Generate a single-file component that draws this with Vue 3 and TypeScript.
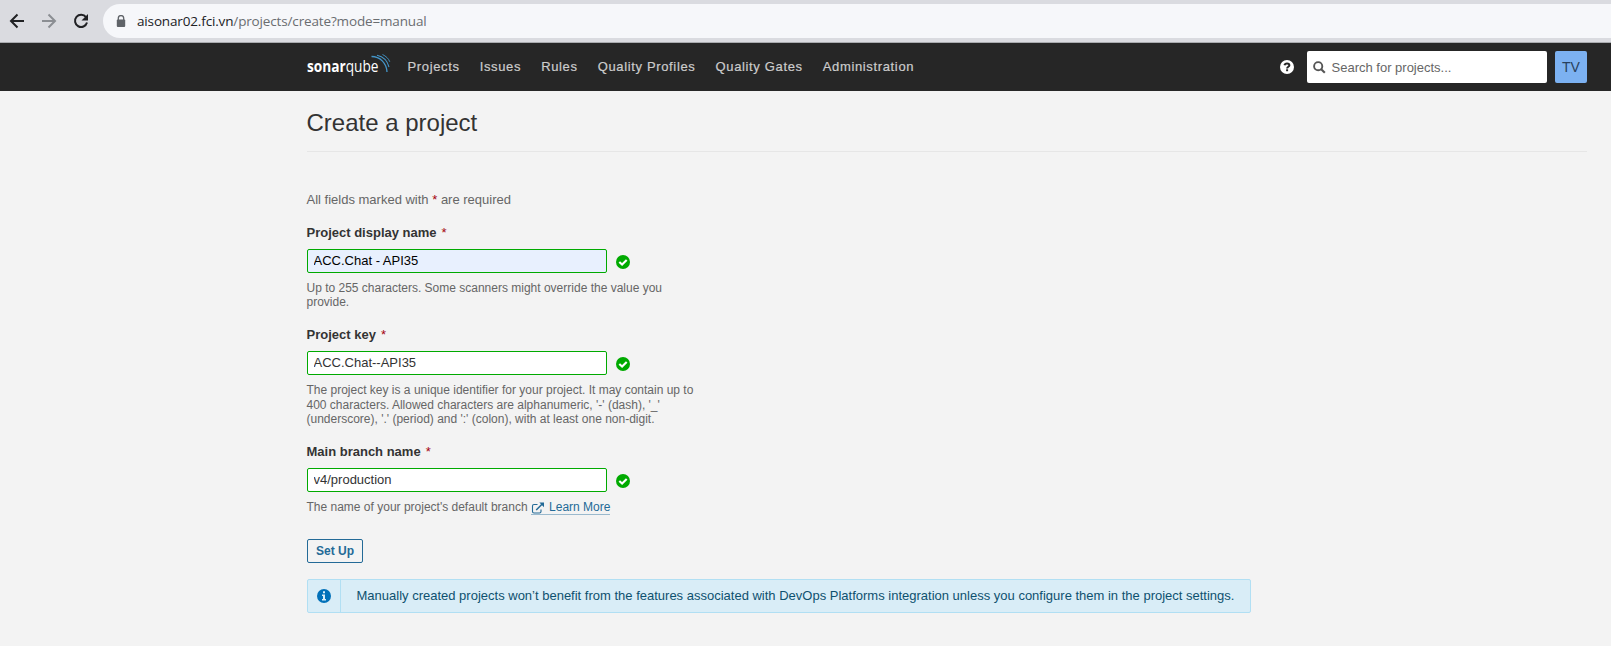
<script setup lang="ts">
import { ref } from 'vue'

interface Field {
  id: string
  label: string
  value: string
  hint: string
  autofilled?: boolean
  link?: string
}

const navItems: string[] = ['Projects', 'Issues', 'Rules', 'Quality Profiles', 'Quality Gates', 'Administration']

const fields = ref<Field[]>([
  {
    id: 'name',
    label: 'Project display name',
    value: 'ACC.Chat - API35',
    hint: 'Up to 255 characters. Some scanners might override the value you\nprovide.',
    autofilled: true,
  },
  {
    id: 'key',
    label: 'Project key',
    value: 'ACC.Chat--API35',
    hint: "The project key is a unique identifier for your project. It may contain up to\n400 characters. Allowed characters are alphanumeric, '-' (dash), '_'\n(underscore), '.' (period) and ':' (colon), with at least one non-digit.",
  },
  {
    id: 'branch',
    label: 'Main branch name',
    value: 'v4/production',
    hint: "The name of your project's default branch",
    link: 'Learn More',
  },
])
</script>

<template>
  <div class="page">
    <div class="browser">
      <svg class="browser-icons" width="103" height="42" viewBox="0 0 103 42" fill="none" stroke-width="2">
        <path d="M24 21H11.500M17.500 14.500 11 21l6.500 6.500" stroke="#202124" />
        <path d="M42 21h12.500M48.500 14.500 55 21l-6.500 6.500" stroke="#8b8e93" />
        <path d="M86 17.200A6.100 6.100 0 1 0 87 22.500" stroke="#202124" />
        <path d="M88 14v6.500h-6.500z" fill="#202124" />
      </svg>
      <div class="omnibox">
        <svg class="lock" width="10" height="13" viewBox="0 0 10 13">
          <path d="M2.300 5V3.300a2.700 2.700 0 0 1 5.400 0V5" fill="none" stroke="#5f6368" stroke-width="1.300" />
          <rect x="0.800" y="4.500" width="8.400" height="7.500" rx="1" fill="#5f6368" />
        </svg>
        <span class="host">aisonar02.fci.vn</span><span class="path">/projects/create?mode=manual</span>
      </div>
    </div>

    <header class="navbar">
      <svg class="logo" width="84" height="30" viewBox="0 0 84 30">
        <text x="0" y="21" textLength="71.500" lengthAdjust="spacingAndGlyphs"><tspan class="logo-bold">sonar</tspan><tspan class="logo-light">qube</tspan></text>
        <g fill="none" stroke="#4495c8">
          <path d="M64.500 5.500C73 5.500 79.500 12 80 21" stroke-width="1.300" />
          <path d="M70 4.200C76 5.500 80.500 10 82 16" stroke-width="1.100" />
          <path d="M75.500 3.500C79 5.200 81.500 7.500 82.800 10.800" stroke-width="0.900" />
        </g>
      </svg>
      <nav class="menu">
        <a v-for="item in navItems" :key="item">{{ item }}</a>
      </nav>
      <svg class="help" width="14" height="14" viewBox="0 0 14 14">
        <circle cx="7" cy="7" r="7" fill="#fff" />
        <path d="M4.500 5.300C4.800 3.900 5.900 3.400 7 3.400c1.300 0 2.400.8 2.400 1.900 0 1.500-2.300 1.500-2.300 3.100" fill="none" stroke="#262626" stroke-width="2" />
        <rect x="6.100" y="9.300" width="2" height="1.900" fill="#262626" />
      </svg>
      <div class="search">
        <svg width="13" height="13" viewBox="0 0 13 13" fill="none" stroke="#555">
          <circle cx="5.200" cy="5.200" r="4.100" stroke-width="1.900" />
          <path d="M8.200 8.200 11.800 11.800" stroke-width="2.100" />
        </svg>
        <span>Search for projects...</span>
      </div>
      <div class="avatar">TV</div>
    </header>

    <main class="content">
      <h1>Create a project</h1>
      <p class="required-note">All fields marked with <em>*</em> are required</p>

      <div v-for="field in fields" :key="field.id" class="field" :class="'field-' + field.id">
        <label :for="field.id">{{ field.label }}<em>*</em></label>
        <div class="control">
          <input :id="field.id" v-model="field.value" type="text" :class="{ autofilled: field.autofilled }" />
          <svg width="14" height="14" viewBox="0 0 14 14">
            <circle cx="7" cy="7" r="7" fill="#0a0" />
            <path d="M3.300 7 6.100 9.600 10.700 5" fill="none" stroke="#fff" stroke-width="2.100" />
          </svg>
        </div>
        <div class="hint"><span class="hint-text">{{ field.hint }}</span><a v-if="field.link" class="learn">
            <svg width="14" height="12" viewBox="0 0 14 12" fill="none" stroke="#236a97">
              <path d="M6.500 2.500H3Q1.500 2.500 1.500 4V9.500Q1.500 11 3 11H8.500Q10 11 10 9.500V7.500" stroke-width="1.100" />
              <path d="M5.200 8 11 2.200" stroke-width="1.500" />
              <path d="M8.300.5H13V5.200z" fill="#236a97" stroke="none" />
            </svg><span>{{ field.link }}</span></a></div>
      </div>

      <button class="submit" type="button">Set Up</button>

      <div class="alert">
        <div class="alert-icon">
          <svg width="14" height="14" viewBox="0 0 14 14">
            <circle cx="7" cy="7" r="7" fill="#0271b9" />
            <path d="M6 2.300h2v1.900H6zM5 5.400h3v4.500h1v1.500H5V9.900h1V6.900H5z" fill="#d9edf7" />
          </svg>
        </div>
        <p>Manually created projects won’t benefit from the features associated with DevOps Platforms integration unless you configure them in the project settings.</p>
      </div>
    </main>
  </div>
</template>

<style>
body {
  margin: 0;
  background: #f3f3f3;
}
</style>

<style scoped>
* {
  box-sizing: border-box;
}
.page {
  width: 1611px;
  height: 646px;
  overflow: hidden;
  background: #f3f3f3;
  color: #333;
  font-family: 'Liberation Sans', Arial, sans-serif;
  font-size: 13px;
  white-space: nowrap;
}
.browser {
  display: flex;
  height: 43px;
  padding-top: 4px;
  background: #dadbe0;
  border-bottom: 1px solid #a9abaf;
}
.browser-icons {
  flex: none;
  margin-top: -4px;
}
.omnibox {
  display: flex;
  align-items: center;
  flex: 1;
  height: 34px;
  padding-left: 13px;
  border-radius: 17px 0 0 17px;
  background: #f6f7fa;
  font-family: 'Open Sans', 'Noto Sans', sans-serif;
  font-size: 13.5px;
  letter-spacing: -0.15px;
}
.lock {
  margin-right: 11px;
}
.host {
  color: #202124;
}
.path {
  color: #6a6d71;
}
.navbar {
  display: flex;
  align-items: center;
  height: 48px;
  padding: 0 24px 0 306.5px;
  background: #262626;
}
.logo {
  flex: none;
  margin-top: -2px;
  font-family: 'Open Sans', sans-serif;
  font-size: 15.5px;
  fill: #fff;
}
.logo-bold {
  font-weight: 700;
}
.logo-light {
  font-weight: 400;
}
.menu {
  display: flex;
  flex: 1;
  gap: 20px;
  margin: -2px 0 0 17px;
  color: #ccc;
  font-size: 13px;
  letter-spacing: 0.65px;
  -webkit-text-stroke: 0.2px #ccc;
}
.search {
  display: flex;
  align-items: center;
  width: 240px;
  height: 32px;
  margin-left: 13px;
  padding-left: 6px;
  border-radius: 2px;
  background: #fff;
  color: #666;
}
.search span {
  margin-left: 5.5px;
}
.avatar {
  width: 32px;
  height: 32px;
  margin-left: 8px;
  border-radius: 2px;
  background: #7cb1f1;
  color: #28405c;
  font-size: 14px;
  line-height: 32px;
  text-align: center;
}
.content {
  padding: 0 24px 0 306.5px;
}
h1 {
  height: 61px;
  margin: 0;
  padding-top: 20px;
  border-bottom: 1px solid #e6e6e6;
  font-size: 24px;
  font-weight: 400;
  line-height: 24px;
}
em {
  color: #a4030f;
  font-style: normal;
  font-weight: 400;
}
.required-note {
  margin: 40px 0 17px;
  color: #666;
  line-height: 16px;
}
.field {
  margin-bottom: 17px;
}
label {
  display: block;
  font-weight: 700;
  line-height: 16px;
}
label em {
  margin-left: 5px;
}
.control {
  display: flex;
  align-items: center;
  gap: 9.5px;
  height: 24px;
  margin: 8px 0;
}
.control svg {
  margin-top: 2px;
}
input {
  width: 300px;
  height: 24px;
  padding: 0 6px 2px;
  border: 1px solid #0a0;
  border-radius: 2px;
  background: #fff;
  color: #333;
  font: 13px 'Liberation Sans', Arial, sans-serif;
  outline: none;
}
input.autofilled {
  background: #e8f0fe;
  color: #000;
}
.hint {
  display: flex;
  color: #666;
  font-size: 12px;
  line-height: 14.5px;
}
.hint-text {
  white-space: pre-line;
}
.field-name .hint {
  height: 29px;
  line-height: 14.2px;
}
.field-key .hint {
  padding-bottom: 0.5px;
}
.field-branch {
  height: 71px;
  margin-bottom: 24px;
}
.learn {
  display: flex;
  height: 15px;
  margin-left: 3.5px;
  border-bottom: 1px solid #9ab9cd;
  color: #236a97;
}
.learn svg {
  margin: 2px 4px 0 0;
}
.submit {
  display: block;
  width: 56px;
  height: 24px;
  padding: 0 0 0 1px;
  border: 1px solid #236a97;
  border-radius: 2px;
  background: transparent;
  color: #236a97;
  font: 700 12px 'Liberation Sans', Arial, sans-serif;
}
.alert {
  display: flex;
  width: 944px;
  height: 34px;
  margin-top: 16px;
  border: 1px solid #b1dff3;
  border-radius: 2px;
  background: #d9edf7;
  color: #0e516f;
}
.alert-icon {
  display: flex;
  align-items: center;
  width: 33px;
  padding-left: 9.5px;
  border-right: 1px solid #b1dff3;
}
.alert p {
  margin: 0 0 0 16px;
  line-height: 32px;
}
</style>
